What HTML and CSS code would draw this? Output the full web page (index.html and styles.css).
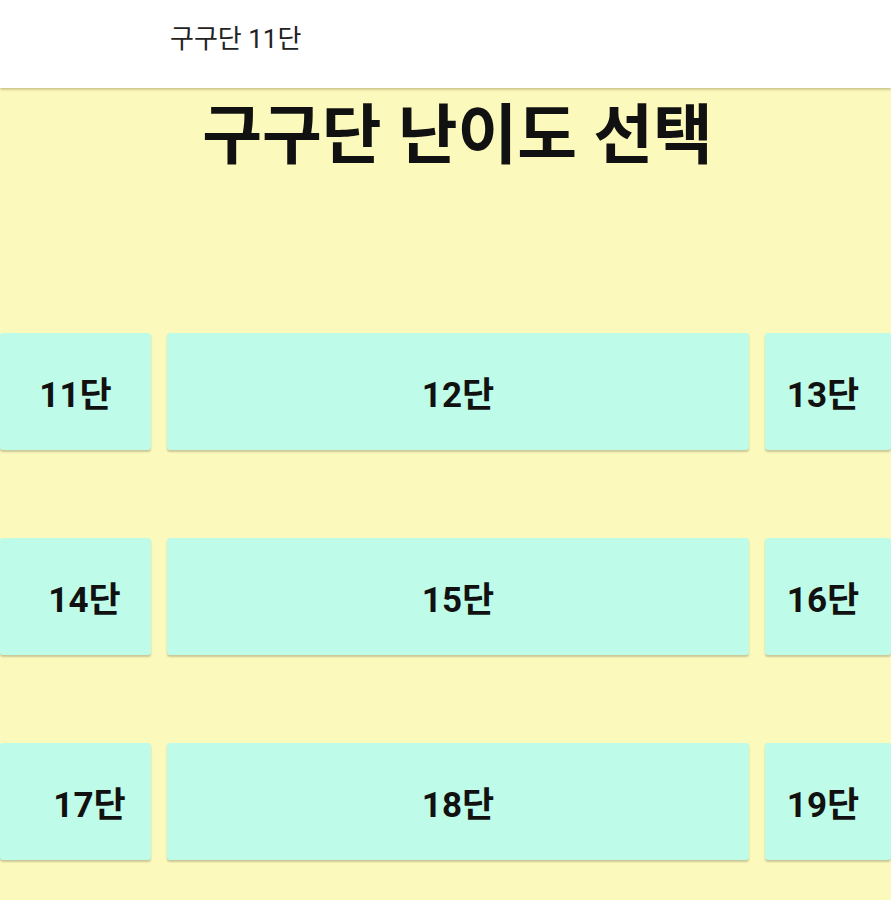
FILE: index.html
```html
<!DOCTYPE html>
<html lang="ko">
<head>
  <meta charset="UTF-8" />
  <meta name="viewport" content="width=device-width, initial-scale=1.0" />
  <title>구구단</title>
  <link rel="stylesheet" href="styles.css">
</head>
<body>
  <header class="app-bar">
    <span class="app-title">구구단 11단</span>
  </header>
  <main class="screen">
    <h1 class="screen-title">구구단 난이도 선택</h1>
    <div class="level-grid">
      <button class="level">11단</button>
      <button class="level">12단</button>
      <button class="level level-edge">13단</button>
      <button class="level shift-1">14단</button>
      <button class="level">15단</button>
      <button class="level level-edge">16단</button>
      <button class="level shift-2">17단</button>
      <button class="level">18단</button>
      <button class="level level-edge">19단</button>
    </div>
  </main>
</body>
</html>
```

FILE: styles.css
```css
:root {
  --bg: #fcf9bc;
  --card: #befbe8;
  --text: #111;
}
html, body {
  margin: 0;
  padding: 0;
}
body {
  background: var(--bg);
  color: var(--text);
  font-family: Roboto, "Noto Sans CJK KR", sans-serif;
  min-height: 100vh;
  overflow: hidden;
}
.app-bar {
  background: #fff;
  height: 88px;
  box-shadow: 0 1px 3px rgba(90, 80, 20, 0.45);
  position: relative;
  z-index: 1;
  box-sizing: border-box;
  padding: 18px 0 0 170px;
}
.app-title {
  font-size: 26px;
  color: #222;
}
.screen {
  display: flex;
  flex-direction: column;
}
.screen-title {
  margin: 8px 0 0;
  text-align: center;
  font-size: 65px;
  font-weight: 700;
  line-height: 80px;
  padding-left: 24px;
}
.level-grid {
  display: grid;
  grid-template-columns: 151px 582px 1fr;
  grid-auto-rows: 117px;
  column-gap: 16px;
  row-gap: 88px;
  margin-top: 157px;
}
.level {
  border: none;
  border-radius: 3px;
  background: var(--card);
  box-shadow: 0 2px 2px rgba(0, 0, 0, 0.2);
  font-family: Roboto, "Noto Sans CJK KR", sans-serif;
  font-size: 35px;
  font-weight: 700;
  color: var(--text);
  padding: 0;
  cursor: pointer;
}
.level-edge {
  padding-right: 10px;
}
.shift-1 {
  padding-left: 18px;
}
.shift-2 {
  padding-left: 28px;
}
```
